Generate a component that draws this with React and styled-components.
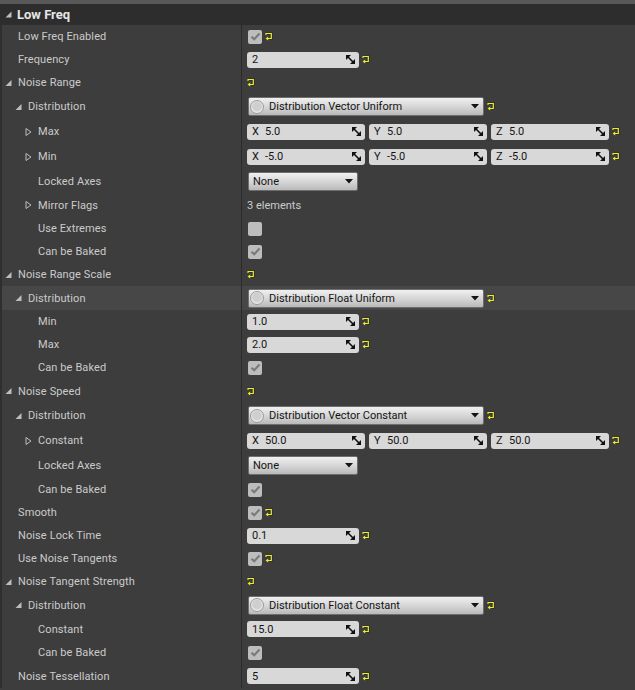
import React from "react";
import styled, { createGlobalStyle } from "styled-components";

const Global = createGlobalStyle`
  html, body { margin: 0; padding: 0; background: #3d3d3d; }
  body { font-family: Roboto, "Noto Sans", "Liberation Sans", sans-serif; }
  * { box-sizing: border-box; }
`;

const Panel = styled.div`
  width: 635px;
  height: 690px;
  overflow: hidden;
  background: #3d3d3d;
  border-top: 4px solid #585858;
  display: flex;
  flex-direction: column;
`;

const Header = styled.div`
  height: 21px;
  flex: none;
  background: #2d2d2d;
  display: flex;
  align-items: center;
  padding-left: 5px;
  gap: 5px;
  color: #e6e6e6;
  font-weight: 700;
  font-size: 13px;
`;

const Row = styled.div`
  height: ${(p) => p.$h}px;
  flex: none;
  display: grid;
  grid-template-columns: 241px 1px 1fr;
  background: ${(p) => (p.$hl ? "#474747" : "#3d3d3d")};
`;

const NameCell = styled.div`
  display: flex;
  align-items: center;
  border-left: 2px solid #2f2f2f;
  padding-left: ${(p) => 16 + p.$level * 10}px;
  position: relative;
  color: #cbcbcb;
  font-size: 11px;
  letter-spacing: 0.1px;
  white-space: nowrap;
`;

const ArrowSlot = styled.span`
  position: absolute;
  left: ${(p) => 3 + p.$level * 10}px;
  top: 50%;
  transform: translateY(-50%);
  display: flex;
`;

const Divider = styled.div`
  background: #2b2b2b;
`;

const ValueCell = styled.div`
  display: flex;
  align-items: center;
  padding-left: 5px;
  gap: 3px;
`;

const CheckBox = styled.div`
  width: 14px;
  height: 14px;
  border-radius: 2px;
  background: #bdbdbd;
  display: flex;
  align-items: center;
  justify-content: center;
  margin-left: 1px;
`;

const NumBox = styled.div`
  width: ${(p) => p.$w}px;
  height: 16px;
  border-radius: 3px;
  background: #d8d8d8;
  display: flex;
  align-items: center;
  padding: 0 4px 0 5px;
  color: #141414;
  font-size: 11px;
`;

const NumText = styled.span`
  flex: 1;
  white-space: nowrap;
`;

const AxisLabel = styled.span`
  width: 13px;
  flex: none;
`;

const VecGroup = styled.div`
  display: flex;
  gap: 4px;
`;

const Combo = styled.div`
  width: ${(p) => p.$w}px;
  height: 19px;
  margin-left: 1px;
  border-radius: 2px;
  border: 1px solid #6e6e6e;
  background: linear-gradient(#f0f0f0, #d4d4d4 55%, #b9b9b9);
  display: flex;
  align-items: center;
  padding: 0 4px 0 ${(p) => (p.$icon ? 1 : 4)}px;
  gap: 5px;
  color: #141414;
  font-size: 11px;
`;

const ComboText = styled.span`
  flex: 1;
  white-space: nowrap;
`;

const CircleIcon = styled.span`
  width: 14px;
  height: 14px;
  border-radius: 50%;
  border: 1px solid #9c9c9c;
  background: radial-gradient(circle at 50% 45%, #cfcfcf 45%, #ececec 70%, #d8d8d8);
  flex: none;
`;

const InfoText = styled.span`
  color: #cbcbcb;
  font-size: 11px;
`;

function Reset() {
  return (
    <svg width="8" height="9" viewBox="0 0 8 9" style={{ flex: "none" }}>
      <path d="M1.5 1.5 H6.5 V6.5 H3" fill="none" stroke="#1a1a00" strokeWidth="2.2" opacity="0.45" />
      <path d="M1 1.5 H6.3 V6.5 H3" fill="none" stroke="#ecec30" strokeWidth="1.2" />
      <path d="M1 1 V3" fill="none" stroke="#ecec30" strokeWidth="1.1" />
      <polygon points="0.6,6.5 3.2,4.4 3.2,8.6" fill="#ecec30" />
    </svg>
  );
}

function Spin() {
  return (
    <svg width="9" height="9" viewBox="0 0 9 9" style={{ flex: "none" }}>
      <polygon points="0,0 5,0 0,5" fill="#111" />
      <polygon points="9,9 4,9 9,4" fill="#111" />
      <line x1="1.5" y1="1.5" x2="7.5" y2="7.5" stroke="#111" strokeWidth="1.6" />
    </svg>
  );
}

function Tick() {
  return (
    <svg width="11" height="9" viewBox="0 0 11 9">
      <path d="M1.5 4.8 L4.2 7.3 L9.5 1.5" fill="none" stroke="#7a7a7a" strokeWidth="2.2" />
    </svg>
  );
}

function Down() {
  return (
    <svg width="8" height="5" viewBox="0 0 8 5" style={{ flex: "none" }}>
      <polygon points="0,0 8,0 4,4.5" fill="#141414" />
    </svg>
  );
}

function Expander({ open }) {
  return open ? (
    <svg width="7" height="7" viewBox="0 0 7 7">
      <polygon points="6.5,0.5 6.5,6.5 0.5,6.5" fill="#bdbdbd" />
    </svg>
  ) : (
    <svg width="7" height="9" viewBox="0 0 7 9">
      <polygon points="1,1 6,4.5 1,8" fill="none" stroke="#bdbdbd" strokeWidth="1" />
    </svg>
  );
}

const rows = [
  { l: "Low Freq Enabled", lv: 0, h: 23, v: { t: "check", c: true, r: true } },
  { l: "Frequency", lv: 0, h: 23, v: { t: "num", x: "2", r: true } },
  { l: "Noise Range", lv: 0, a: "open", h: 23, v: { t: "reset" } },
  { l: "Distribution", lv: 1, a: "open", h: 25, v: { t: "dist", x: "Distribution Vector Uniform" } },
  { l: "Max", lv: 2, a: "closed", h: 25, v: { t: "vec", x: ["5.0", "5.0", "5.0"] } },
  { l: "Min", lv: 2, a: "closed", h: 25, v: { t: "vec", x: ["-5.0", "-5.0", "-5.0"] } },
  { l: "Locked Axes", lv: 2, h: 24, v: { t: "none" } },
  { l: "Mirror Flags", lv: 2, a: "closed", h: 24, v: { t: "info", x: "3 elements" } },
  { l: "Use Extremes", lv: 2, h: 23, v: { t: "check", c: false } },
  { l: "Can be Baked", lv: 2, h: 23, v: { t: "check", c: true } },
  { l: "Noise Range Scale", lv: 0, a: "open", h: 23, v: { t: "reset" } },
  { l: "Distribution", lv: 1, a: "open", h: 24, hl: true, v: { t: "dist", x: "Distribution Float Uniform" } },
  { l: "Min", lv: 2, h: 23, v: { t: "num", x: "1.0", r: true } },
  { l: "Max", lv: 2, h: 23, v: { t: "num", x: "2.0", r: true } },
  { l: "Can be Baked", lv: 2, h: 23, v: { t: "check", c: true } },
  { l: "Noise Speed", lv: 0, a: "open", h: 24, v: { t: "reset" } },
  { l: "Distribution", lv: 1, a: "open", h: 25, v: { t: "dist", x: "Distribution Vector Constant" } },
  { l: "Constant", lv: 2, a: "closed", h: 25, v: { t: "vec", x: ["50.0", "50.0", "50.0"] } },
  { l: "Locked Axes", lv: 2, h: 25, v: { t: "none" } },
  { l: "Can be Baked", lv: 2, h: 23, v: { t: "check", c: true } },
  { l: "Smooth", lv: 0, h: 23, v: { t: "check", c: true, r: true } },
  { l: "Noise Lock Time", lv: 0, h: 23, v: { t: "num", x: "0.1", r: true } },
  { l: "Use Noise Tangents", lv: 0, h: 23, v: { t: "check", c: true, r: true } },
  { l: "Noise Tangent Strength", lv: 0, a: "open", h: 23, v: { t: "reset" } },
  { l: "Distribution", lv: 1, a: "open", h: 24, v: { t: "dist", x: "Distribution Float Constant" } },
  { l: "Constant", lv: 2, h: 24, v: { t: "num", x: "15.0", r: true } },
  { l: "Can be Baked", lv: 2, h: 23, v: { t: "check", c: true } },
  { l: "Noise Tessellation", lv: 0, h: 24, v: { t: "num", x: "5", r: true } },
];

function Value({ v }) {
  switch (v.t) {
    case "check":
      return (
        <>
          <CheckBox>{v.c && <Tick />}</CheckBox>
          {v.r && <Reset />}
        </>
      );
    case "num":
      return (
        <>
          <NumBox $w={112}>
            <NumText>{v.x}</NumText>
            <Spin />
          </NumBox>
          <Reset />
        </>
      );
    case "reset":
      return <Reset />;
    case "dist":
      return (
        <>
          <Combo $w={236} $icon>
            <CircleIcon />
            <ComboText>{v.x}</ComboText>
            <Down />
          </Combo>
          <Reset />
        </>
      );
    case "vec":
      return (
        <>
          <VecGroup>
            {["X", "Y", "Z"].map((a, i) => (
              <NumBox key={a} $w={118}>
                <AxisLabel>{a}</AxisLabel>
                <NumText>{v.x[i]}</NumText>
                <Spin />
              </NumBox>
            ))}
          </VecGroup>
          <Reset />
        </>
      );
    case "none":
      return (
        <Combo $w={110}>
          <ComboText>None</ComboText>
          <Down />
        </Combo>
      );
    case "info":
      return <InfoText>{v.x}</InfoText>;
    default:
      return null;
  }
}

export default function App() {
  return (
    <>
      <Global />
      <Panel>
        <Header>
          <Expander open />
          <span>Low Freq</span>
        </Header>
        {rows.map((r, i) => (
          <Row key={i} $h={r.h} $hl={r.hl}>
            <NameCell $level={r.lv}>
              {r.a && (
                <ArrowSlot $level={r.lv}>
                  <Expander open={r.a === "open"} />
                </ArrowSlot>
              )}
              {r.l}
            </NameCell>
            <Divider />
            <ValueCell>
              <Value v={r.v} />
            </ValueCell>
          </Row>
        ))}
      </Panel>
    </>
  );
}
